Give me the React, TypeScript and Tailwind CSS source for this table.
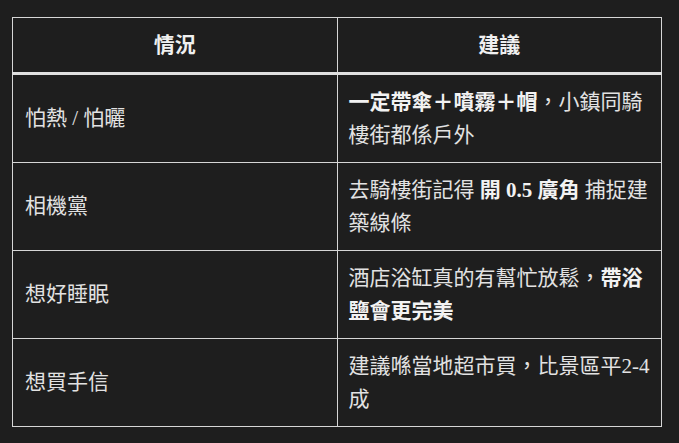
const rows: { situation: string; advice: React.ReactNode }[] = [
  {
    situation: '怕熱 / 怕曬',
    advice: (
      <>
        <strong className="font-bold text-[#f2f2f2]">一定帶傘＋噴霧＋帽</strong>，小鎮同騎樓街都係戶外
      </>
    ),
  },
  {
    situation: '相機黨',
    advice: (
      <>
        去騎樓街記得 <strong className="font-bold text-[#f2f2f2]">開 0.5 廣角</strong> 捕捉建築線條
      </>
    ),
  },
  {
    situation: '想好睡眠',
    advice: (
      <>
        酒店浴缸真的有幫忙放鬆，<strong className="font-bold text-[#f2f2f2]">帶浴鹽會更完美</strong>
      </>
    ),
  },
  {
    situation: '想買手信',
    advice: <>建議喺當地超市買，比景區平2-4成</>,
  },
]

export default function App() {
  return (
    <div
      className="min-h-[443px] bg-[#1e1e1e] pl-3 pt-[17px] text-[#e2e2e2]"
      style={{ fontFamily: '"Liberation Serif", "Noto Sans CJK TC", serif' }}
    >
      <table className="w-[650px] table-fixed border-collapse text-[21px] leading-[33px]">
        <thead>
          <tr>
            <th className="border border-b-[3px] border-[#d6d6d6] border-b-[#e0e0e0] px-3 py-[10.5px] text-center font-bold text-[#f0f0f0]">
              情況
            </th>
            <th className="border border-b-[3px] border-[#d6d6d6] border-b-[#e0e0e0] px-3 py-[10.5px] text-center font-bold text-[#f0f0f0]">
              建議
            </th>
          </tr>
        </thead>
        <tbody>
          {rows.map(r => (
            <tr key={r.situation}>
              <td className="border border-[#d6d6d6] px-3 py-[10.5px] align-middle">{r.situation}</td>
              <td className="border border-[#d6d6d6] px-[11px] py-[10.5px] align-middle">{r.advice}</td>
            </tr>
          ))}
        </tbody>
      </table>
    </div>
  )
}
